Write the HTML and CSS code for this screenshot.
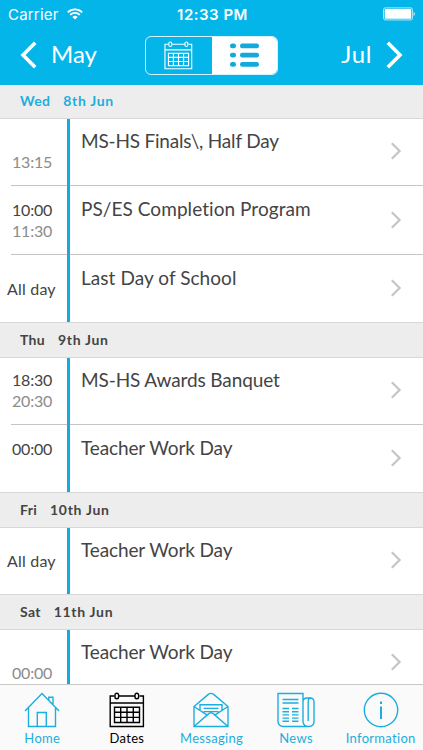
FILE: index.html
```html
<!DOCTYPE html>
<html lang="en">

<head>
    <meta charset="utf-8">
    <title>Dates</title>
    <link rel="stylesheet" href="styles.css">
</head>

<body>
    <!-- shared icons -->
    <svg class="defs" width="0" height="0">
        <symbol id="calendar" viewBox="0 0 36 36">
            <g fill="none" stroke="currentColor" stroke-width="1.4">
                <path d="M5.5 4H1.2v30.5h33.2V4h-3.900M10 4h16M1.200 11h33.200" />
                <rect x="6" y="1.2" width="3.6" height="5.6" rx="1.8" />
                <rect x="26" y="1.2" width="3.6" height="5.6" rx="1.8" />
                <path d="M5.5 15.3h25v15.2h-25zM5.5 20.3h25M5.5 25.4h25M11.7 15.3v15.2M18 15.3v15.2M24.3 15.3v15.2" />
            </g>
        </symbol>
        <symbol id="chevron" viewBox="0 0 12 18">
            <path d="M1.8 1.2L9.6 9l-7.800 7.800" fill="none" stroke="currentColor" stroke-width="2.2" />
        </symbol>
    </svg>

    <div class="screen">
        <header class="top">
            <div class="status-bar">
                <div class="carrier">
                    <span class="carrier-name">Carrier</span>
                    <svg width="16" height="12" viewBox="0 0 16 12" fill="none" stroke="#fff" stroke-width="1.9">
                        <path d="M.8 4.4a10.2 10.2 0 0 1 14.4 0M3.2 6.9a6.8 6.8 0 0 1 9.6 0" />
                        <path d="M8 11.6L5.4 9a3.7 3.7 0 0 1 5.2 0z" fill="#fff" stroke="none" />
                    </svg>
                </div>
                <span class="clock">12:33 PM</span>
                <div class="battery-box">
                    <svg width="34" height="14" viewBox="0 0 34 14">
                        <rect x=".6" y=".9" width="28.8" height="12" rx="1.5" fill="none" stroke="#b9ebfa" />
                        <rect x="1.8" y="2.1" width="26.4" height="9.6" rx=".6" fill="#fff" />
                        <path d="M30.6 5a2.2 2.2 0 0 1 0 4z" fill="#d5f3fc" />
                    </svg>
                </div>
            </div>
            <nav class="month-bar">
                <a class="month prev">
                    <svg width="18" height="28" viewBox="0 0 18 28"><path d="M15.2 1.7L3 14l12.2 12.3" /></svg>
                    <span>May</span>
                </a>
                <div class="switch">
                    <div class="switch-item"><svg width="29" height="29"><use href="#calendar" /></svg></div>
                    <div class="switch-item active">
                        <svg width="31" height="25" viewBox="0 0 31 25" fill="#12aadb">
                            <rect x="1" y=".5" width="6" height="4.8" rx="2.3" />
                            <rect x="1" y="9.8" width="6" height="4.8" rx="2.3" />
                            <rect x="1" y="19" width="6" height="4.8" rx="2.3" />
                            <rect x="11" y=".5" width="19" height="4.8" rx="2.3" />
                            <rect x="11" y="9.8" width="19" height="4.8" rx="2.3" />
                            <rect x="11" y="19" width="19" height="4.8" rx="2.3" />
                        </svg>
                    </div>
                </div>
                <a class="month next">
                    <span>Jul</span>
                    <svg width="18" height="28" viewBox="0 0 18 28"><path d="M2.8 1.7L15 14 2.8 26.3" /></svg>
                </a>
            </nav>
        </header>

        <main class="list">
            <h2 class="day today"><span>Wed</span><span class="date">8th Jun</span></h2>
            <div class="event first">
                <div class="time"><span></span><span class="end">13:15</span></div>
                <div class="title tighter">MS-HS Finals\, Half Day</div>
                <svg class="arrow" width="12" height="18"><use href="#chevron" /></svg>
            </div>
            <div class="event tall">
                <div class="time"><span>10:00</span><span class="end">11:30</span></div>
                <div class="title wide">PS/ES Completion Program</div>
                <svg class="arrow" width="12" height="18"><use href="#chevron" /></svg>
            </div>
            <div class="event last">
                <div class="time all-day"><span>All day</span></div>
                <div class="title wide">Last Day of School</div>
                <svg class="arrow" width="12" height="18"><use href="#chevron" /></svg>
            </div>

            <h2 class="day"><span>Thu</span><span class="date">9th Jun</span></h2>
            <div class="event first">
                <div class="time"><span>18:30</span><span class="end">20:30</span></div>
                <div class="title">MS-HS Awards Banquet</div>
                <svg class="arrow" width="12" height="18"><use href="#chevron" /></svg>
            </div>
            <div class="event last">
                <div class="time"><span>00:00</span></div>
                <div class="title">Teacher Work Day</div>
                <svg class="arrow" width="12" height="18"><use href="#chevron" /></svg>
            </div>

            <h2 class="day"><span>Fri</span><span class="date">10th Jun</span></h2>
            <div class="event first short last">
                <div class="time all-day"><span>All day</span></div>
                <div class="title">Teacher Work Day</div>
                <svg class="arrow" width="12" height="18"><use href="#chevron" /></svg>
            </div>

            <h2 class="day"><span>Sat</span><span class="date">11th Jun</span></h2>
            <div class="event first last">
                <div class="time"><span></span><span class="end">00:00</span></div>
                <div class="title">Teacher Work Day</div>
                <svg class="arrow" width="12" height="18"><use href="#chevron" /></svg>
            </div>
        </main>

        <nav class="tabs">
            <a class="tab">
                <svg width="36" height="36" viewBox="0 0 36 36">
                    <path d="M1 19L18 1.5 35 19M4.5 16v18.5h27V16M13.3 34.5v-14h9v14M24.8 8V5.3H29V12" />
                </svg>
                <span>Home</span>
            </a>
            <a class="tab selected">
                <svg width="36" height="36"><use href="#calendar" /></svg>
                <span>Dates</span>
            </a>
            <a class="tab">
                <svg width="36" height="36" viewBox="0 0 36 36">
                    <path d="M1 14.5v20h34v-20L21 2.6q-3-2.4-6 0zM1 14.5l13.2 8.7M35 14.5l-13.2 8.7M1 34.5l14.5-12.6q2.5-2 5 0L35 34.5M7 18.4v-5.6h22v5.6M10.5 16.4h15M10.5 19.6h15" />
                </svg>
                <span>Messaging</span>
            </a>
            <a class="tab">
                <svg width="38" height="36" viewBox="0 0 38 36">
                    <path d="M32 34.5H6a5 5 0 0 1-5-5v-28h25v28a5 5 0 0 0 5.5 5q5.500 0 5.500-5V10q0-4-4-4h-3q-4 0-4 4M31.200 29V10q0-4 2.500-4" />
                    <path d="M5.5 7.500h16M5.500 11h16M5.500 16.500h6.500M5.500 19.700h6.500M5.500 22.900h6.500M5.500 26.100h6.500M5.500 29.300h6.500M15 16.500h6.500M15 19.700h6.500M15 22.900h6.500M15 26.100h6.500M15 29.300h6.500" />
                </svg>
                <span>News</span>
            </a>
            <a class="tab">
                <svg width="36" height="36" viewBox="0 0 36 36">
                    <circle cx="18" cy="18" r="16.7" />
                    <path d="M18 14.5v12.500M18 9.500v2.500" stroke-width="2" />
                </svg>
                <span>Information</span>
            </a>
        </nav>
    </div>
</body>

</html>
```
FILE: styles.css
```css
* {
    box-sizing: border-box;
}

body {
    margin: 0;
    background: #fff;
    font-family: Lato, "Liberation Sans", sans-serif;
}

svg {
    display: block;
    flex: none;
}

.defs {
    position: absolute;
}

.screen {
    display: flex;
    flex-direction: column;
    height: 750px;
    overflow: hidden;
}

/* header */
.top {
    flex: none;
    height: 85px;
    background: #04b5ea;
    color: #fff;
}

.status-bar {
    display: grid;
    grid-template-columns: 1fr auto 1fr;
    align-items: center;
    height: 28px;
    padding: 0 6px 0 8px;
    font-family: Inter, "Liberation Sans", sans-serif;
    font-size: 15px;
}

.carrier {
    display: flex;
    align-items: center;
    gap: 8px;
}

.carrier-name {
    letter-spacing: 0.2px;
}

.clock {
    font-weight: 600;
    letter-spacing: 0.5px;
}

.battery-box {
    display: flex;
    justify-content: flex-end;
}

.month-bar {
    display: grid;
    grid-template-columns: 1fr 133px 1fr;
    align-items: center;
    height: 54px;
    padding: 0 20px;
}

.month {
    display: flex;
    align-items: center;
    gap: 13px;
    font-size: 24px;
    line-height: 30px;
}

.month span {
    padding-bottom: 2px;
}

.month path {
    fill: none;
    stroke: #fff;
    stroke-width: 3.6;
}

.next {
    justify-content: flex-end;
    letter-spacing: 0.6px;
}

.switch {
    display: flex;
    height: 39px;
    border: 1px solid #d5f3fc;
    border-radius: 6px;
    overflow: hidden;
}

.switch-item {
    display: flex;
    flex: 1;
    align-items: center;
    justify-content: center;
}

.switch-item.active {
    background: #fff;
}

/* list */
.list {
    flex: 1;
    min-height: 0;
    overflow: hidden;
}

.day {
    display: flex;
    align-items: center;
    gap: 13px;
    height: 36px;
    margin: 0;
    padding: 0 20px 2px;
    background: #ededed;
    border-top: 1px solid #d8d8d8;
    border-bottom: 1px solid #d8d8d8;
    color: #444;
    font-size: 14px;
    font-weight: 700;
    letter-spacing: 0.3px;
}

.day .date {
    letter-spacing: 0.7px;
}

.today {
    height: 34px;
    border-top: none;
    color: #1caede;
}

.event {
    position: relative;
    display: flex;
    height: 67px;
    color: #444;
}

.event.tall {
    height: 69px;
}

.event.short {
    height: 66px;
}

.event::after {
    content: "";
    position: absolute;
    left: 11px;
    right: 0;
    bottom: 0;
    height: 1px;
    background: rgba(140, 140, 140, 0.5);
}

.event.last::after {
    display: none;
}

.time {
    display: flex;
    flex-direction: column;
    width: 70px;
    padding: 13px 0 0 12px;
    border-right: 3px solid #12addd;
    font-size: 16px;
    line-height: 21px;
    letter-spacing: -0.2px;
}

.first .time {
    padding-top: 11px;
}

.time span {
    height: 21px;
}

.time .end {
    color: #8c8c8c;
}

.event .time.all-day {
    justify-content: center;
    padding: 0 0 1px 7px;
    letter-spacing: 0.2px;
}

.title {
    flex: 1;
    padding: 10px 0 0 11px;
    font-size: 19px;
    line-height: 25px;
    letter-spacing: -0.12px;
    white-space: nowrap;
}

.title.wide {
    letter-spacing: 0.06px;
}

.title.tighter {
    letter-spacing: -0.2px;
}

.first .title {
    padding-top: 9px;
}

.arrow {
    align-self: center;
    margin: 0 21px 1px 0;
    color: #c4c4c9;
}

.first .arrow {
    margin-bottom: 3px;
}

/* bottom tabs */
.tabs {
    display: grid;
    grid-template-columns: repeat(5, 1fr);
    flex: none;
    height: 66px;
    background: #fafafa;
    border-top: 1px solid #c8c8c8;
}

.tab {
    display: flex;
    flex-direction: column;
    align-items: center;
    padding-top: 7px;
    color: #1caede;
    font-size: 13px;
    line-height: 21px;
    white-space: nowrap;
}

.tab > svg {
    fill: none;
    stroke: currentColor;
    stroke-width: 1.4;
}

.tab > span {
    letter-spacing: 0.3px;
}

.tab.selected {
    color: #000;
}
```
